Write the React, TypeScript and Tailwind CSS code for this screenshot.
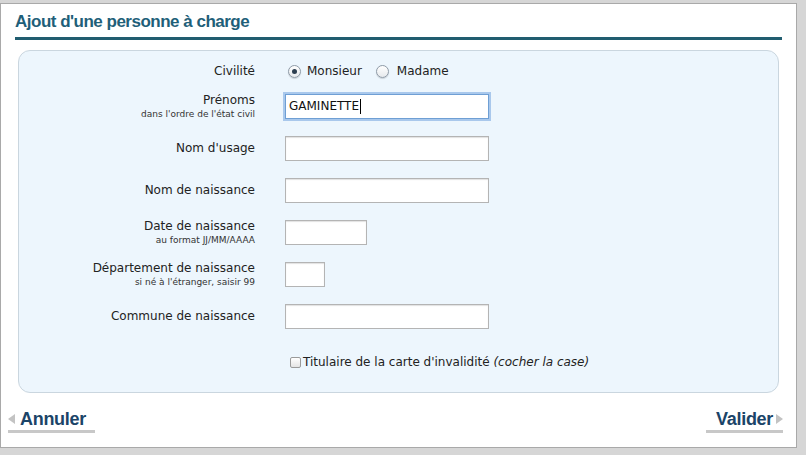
import React from "react";

const LABEL_FONT = { fontFamily: '"DejaVu Sans", Verdana, sans-serif' };
const TITLE_FONT = { fontFamily: '"Liberation Sans", Arial, sans-serif' };

type Field = {
  label: string;
  help?: string;
  width: string;
  value?: string;
  focused?: boolean;
};

const FIELDS: Field[] = [
  { label: "Prénoms", help: "dans l'ordre de l'état civil", width: "w-[204px]", value: "GAMINETTE", focused: true },
  { label: "Nom d'usage", width: "w-[204px]" },
  { label: "Nom de naissance", width: "w-[204px]" },
  { label: "Date de naissance", help: "au format JJ/MM/AAAA", width: "w-[82px]" },
  { label: "Département de naissance", help: "si né à l'étranger, saisir 99", width: "w-[40px]" },
  { label: "Commune de naissance", width: "w-[204px]" },
];

function Radio({ checked }: { checked?: boolean }) {
  return (
    <span className="flex h-[13px] w-[13px] items-center justify-center rounded-full border border-[#8e9aa6] bg-gradient-to-b from-white to-[#e6e9ec] shadow-[0_1px_1px_rgba(0,0,0,0.15)]">
      {checked && <span className="h-[5px] w-[5px] rounded-full bg-[#2c3e50]" />}
    </span>
  );
}

function FormRow({ field }: { field: Field }) {
  return (
    <div className="flex h-[42px] items-center">
      <div className="flex w-[236px] flex-col items-end text-right">
        <span className="text-[12px] leading-[15px] text-[#222]">{field.label}</span>
        {field.help && <span className="mt-[1px] text-[9px] leading-[11px] text-[#333]">{field.help}</span>}
      </div>
      <div className="ml-[30px]">
        <div
          className={`flex h-[25px] ${field.width} items-center bg-white px-[3px] text-[12px] text-[#111] ${
            field.focused
              ? "border border-[#6f9fd4] shadow-[0_0_0_2px_#a9c8ec]"
              : "border border-[#b4b4b4] shadow-[inset_0_1px_1px_rgba(0,0,0,0.12)]"
          }`}
        >
          {field.value}
          {field.focused && <span className="ml-[1px] h-[15px] w-[1px] bg-black" />}
        </div>
      </div>
    </div>
  );
}

function FooterLink({ label, side }: { label: string; side: "left" | "right" }) {
  return (
    <div className="flex flex-col">
      <div className={`flex items-center ${side === "right" ? "justify-end" : ""}`}>
        {side === "left" && (
          <span className="mr-[5px] h-0 w-0 border-y-[5px] border-r-[7px] border-y-transparent border-r-[#c3c3c3]" />
        )}
        <span className="text-[18px] font-bold leading-[20px] tracking-[-0.3px] text-[#1b4468]" style={TITLE_FONT}>
          {label}
        </span>
        {side === "right" && (
          <span className="ml-[3px] h-0 w-0 border-y-[5px] border-l-[7px] border-y-transparent border-l-[#c3c3c3]" />
        )}
      </div>
      <div className="mt-[1px] h-[3px] bg-[#c8c8c8]" />
    </div>
  );
}

export default function App() {
  return (
    <div className="h-[455px] w-[806px] overflow-hidden bg-[#d6d6d6] pt-[3px]" style={LABEL_FONT}>
      <div className="flex h-[445px] w-[797px] flex-col border border-[#a9a9a9] bg-white px-[14px]">
        {/* Title */}
        <div className="pt-[7px]">
          <h1 className="text-[17px] font-bold leading-[22px] tracking-[-0.5px] text-[#1f5f79]" style={TITLE_FONT}>
            Ajout d'une personne à charge
          </h1>
          <div className="mt-[4px] h-[3px] bg-[#215d70]" />
        </div>

        {/* Form panel */}
        <div className="mx-[3px] mt-[10px] h-[343px] rounded-[12px] border border-[#cad6df] bg-[#edf6fd] pt-[6px]">
          <div className="flex h-[28px] items-center">
            <div className="w-[236px] text-right text-[12px] text-[#222]">Civilité</div>
            <div className="ml-[33px] flex items-center text-[12px] text-[#222]">
              <Radio checked />
              <span className="ml-[6px]">Monsieur</span>
              <span className="ml-[14px]">
                <Radio />
              </span>
              <span className="ml-[8px]">Madame</span>
            </div>
          </div>

          {FIELDS.map((f) => (
            <FormRow key={f.label} field={f} />
          ))}

          <div className="flex h-[50px] items-center pl-[271px] text-[12px] text-[#222]">
            <span className="mr-[2px] h-[11px] w-[11px] rounded-[2px] border border-[#9a9a9a] bg-gradient-to-b from-white to-[#e4e4e4]" />
            <span>
              Titulaire de la carte d'invalidité <em>(cocher la case)</em>
            </span>
          </div>
        </div>

        {/* Footer */}
        <div className="mt-[16px] flex justify-between">
          <div className="-ml-[7px] w-[87px]">
            <FooterLink label="Annuler" side="left" />
          </div>
          <div className="-mr-[1px] w-[77px]">
            <FooterLink label="Valider" side="right" />
          </div>
        </div>
      </div>
    </div>
  );
}
